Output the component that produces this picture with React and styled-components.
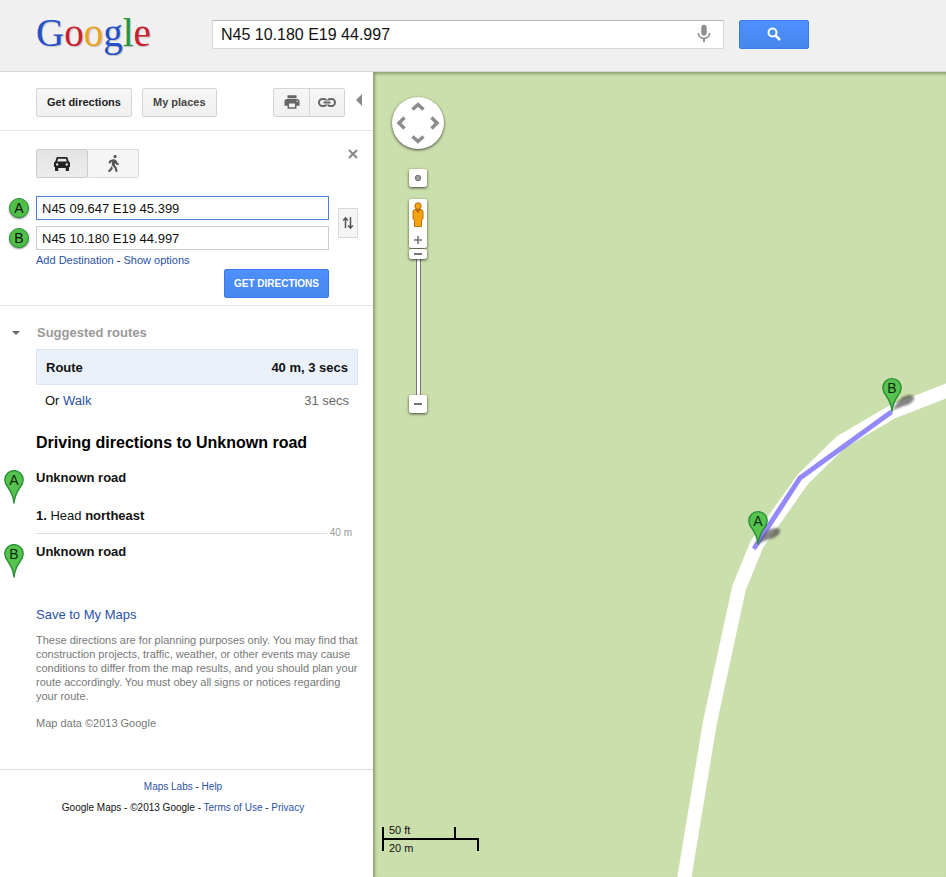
import React, { useState } from 'react';
import styled, { createGlobalStyle } from 'styled-components';
import { MdPrint, MdMic } from 'react-icons/md';
import { FaWalking } from 'react-icons/fa';

const LOGO = [
  ['G', '#2450c8'],
  ['o', '#c9202f'],
  ['o', '#e9a21b'],
  ['g', '#2450c8'],
  ['l', '#1f9a3a'],
  ['e', '#c9202f'],
];

const PinShape = ({ letter }) => (
  <g>
    <path
      d="M10 33.500 C9.500 26 7.500 22.500 4 17.500 C2 15 .8 12.800 .8 9.800 A9.200 9.200 0 0 1 19.200 9.800 C19.200 12.800 18 15 16 17.500 C12.500 22.500 10.500 26 10 33.500Z"
      fill="#55c34e"
      stroke="#2a8f35"
      strokeWidth="1.400"
    />
    <text x="10" y="15" textAnchor="middle" fontSize="14" fill="#0c2a0c">
      {letter}
    </text>
  </g>
);

const Pin = ({ letter }) => (
  <StPin width="20" height="34" viewBox="0 0 20 34">
    <PinShape letter={letter} />
  </StPin>
);

const CarIcon = () => (
  <svg width="16" height="14" viewBox="0 0 16 14" fill="currentColor">
    <path
      fillRule="evenodd"
      d="M3.800 0h8.400c.8 0 1.300.4 1.500 1.100L14.700 4.500c.8.300 1.300.9 1.300 1.700V10h-1v3c0 .6-.4 1-1 1h-1.300c-.6 0-1-.4-1-1v-2H4.300v2c0 .6-.4 1-1 1H2c-.6 0-1-.4-1-1v-3H0V6.200c0-.8.5-1.400 1.300-1.700l1-3.400C2.500.4 3 0 3.800 0zM4 1.700L3.200 4.500h9.600L12 1.700zM3.200 6.200a1.200 1.200 0 1 0 0 2.400 1.200 1.200 0 0 0 0-2.400zm9.600 0a1.200 1.200 0 1 0 0 2.400 1.200 1.200 0 0 0 0-2.400z"
    />
  </svg>
);

const LinkIcon = () => (
  <svg width="18" height="9" viewBox="0 0 18 9" fill="none" stroke="currentColor" strokeWidth="2">
    <path d="M8 2.500V2.300C7.700 1.500 7 1 6 1H4.500a3.500 3.500 0 0 0 0 7H6c1 0 1.700-.5 2-1.300v-.2M10 2.500v-.2c.3-.8 1-1.300 2-1.300h1.500a3.500 3.500 0 0 1 0 7H12c-1 0-1.700-.5-2-1.300v-.2M5.500 4.500h7" />
  </svg>
);

const SearchIcon = () => (
  <svg width="14" height="14" viewBox="0 0 14 14" fill="none" stroke="currentColor">
    <circle cx="5.500" cy="5.500" r="4" strokeWidth="2" />
    <path d="M8.500 8.500l4.500 4.500" strokeWidth="2.500" />
  </svg>
);

function Header() {
  const [query, setQuery] = useState('N45 10.180 E19 44.997');

  return (
    <StHeader>
      <StLogo>
        {LOGO.map(([letter, color], i) => (
          <StLogoLetter key={i} $color={color}>
            {letter}
          </StLogoLetter>
        ))}
      </StLogo>
      <StSearchBox>
        <StSearchInput aria-label="Search maps" value={query} onChange={(e) => setQuery(e.target.value)} />
        <StMicButton aria-label="Voice search">
          <MdMic size={22} />
        </StMicButton>
      </StSearchBox>
      <StSearchButton aria-label="Search">
        <SearchIcon />
      </StSearchButton>
    </StHeader>
  );
}

function DirectionsForm() {
  const [from, setFrom] = useState('N45 09.647 E19 45.399');
  const [to, setTo] = useState('N45 10.180 E19 44.997');

  const swap = () => {
    setFrom(to);
    setTo(from);
  };

  return (
    <StForm onSubmit={(e) => e.preventDefault()}>
      <StFormTop>
        <StModes>
          <StModeButton type="button" aria-label="By car" $active>
            <CarIcon />
          </StModeButton>
          <StModeButton type="button" aria-label="Walking">
            <FaWalking size={17} />
          </StModeButton>
        </StModes>
        <StCloseButton type="button" aria-label="Close">
          <svg width="10" height="10" viewBox="0 0 10 10" fill="none" stroke="#888" strokeWidth="2">
            <path d="M1 1l8 8M9 1L1 9" />
          </svg>
        </StCloseButton>
      </StFormTop>
      <StFields>
        <StPlaces>
          <StPlaceRow>
            <StBadge htmlFor="from">A</StBadge>
            <StPlaceInput id="from" $active value={from} onChange={(e) => setFrom(e.target.value)} />
          </StPlaceRow>
          <StPlaceRow>
            <StBadge htmlFor="to">B</StBadge>
            <StPlaceInput id="to" value={to} onChange={(e) => setTo(e.target.value)} />
          </StPlaceRow>
        </StPlaces>
        <StSwapButton type="button" aria-label="Swap start and end" onClick={swap}>
          <svg width="12" height="14" viewBox="0 0 12 14" fill="none" stroke="#555" strokeWidth="1.500">
            <path d="M3.500 12V2M1.200 4.500l2.300-2.700 2.300 2.700M8.500 1v11M6.200 9.500l2.300 2.700 2.300-2.700" />
          </svg>
        </StSwapButton>
      </StFields>
      <StOptions>
        <StLink href="#add">Add Destination</StLink> - <StLink href="#options">Show options</StLink>
      </StOptions>
      <StSubmit type="submit">GET DIRECTIONS</StSubmit>
    </StForm>
  );
}

function Routes() {
  return (
    <StRoutes>
      <StRoutesTitle>
        <StCaret />
        Suggested routes
      </StRoutesTitle>
      <StRouteRow $selected>
        <span>Route</span>
        <span>40 m, 3 secs</span>
      </StRouteRow>
      <StRouteRow>
        <span>
          Or <StLink href="#walk">Walk</StLink>
        </span>
        <StDuration>31 secs</StDuration>
      </StRouteRow>

      <StHeading>Driving directions to Unknown road</StHeading>
      <StWaypoint>
        <Pin letter="A" />
        <b>Unknown road</b>
      </StWaypoint>
      <StStep>
        <b>1.</b> Head <b>northeast</b>
      </StStep>
      <StDistance>40 m</StDistance>
      <StWaypoint>
        <Pin letter="B" />
        <b>Unknown road</b>
      </StWaypoint>

      <StSave>
        <StLink href="#save">Save to My Maps</StLink>
      </StSave>
      <StNotice>
        These directions are for planning purposes only. You may find that construction projects, traffic, weather, or
        other events may cause conditions to differ from the map results, and you should plan your route accordingly.
        You must obey all signs or notices regarding your route.
      </StNotice>
      <StNotice>Map data ©2013 Google</StNotice>
    </StRoutes>
  );
}

function Sidebar() {
  return (
    <StSidebar>
      <StToolbar>
        <StButton $dark>Get directions</StButton>
        <StButton>My places</StButton>
        <StTools>
          <StToolButton aria-label="Print">
            <MdPrint size={18} />
          </StToolButton>
          <StToolButton aria-label="Link">
            <LinkIcon />
          </StToolButton>
        </StTools>
        <StCollapse aria-label="Hide panel">
          <svg width="6" height="12" viewBox="0 0 6 12">
            <path d="M6 0v12L0 6z" fill="#888" />
          </svg>
        </StCollapse>
      </StToolbar>
      <DirectionsForm />
      <Routes />
      <StFooter>
        <p>
          <StLink href="#labs">Maps Labs</StLink> - <StLink href="#help">Help</StLink>
        </p>
        <p>
          Google Maps - ©2013 Google - <StLink href="#terms">Terms of Use</StLink> -{' '}
          <StLink href="#privacy">Privacy</StLink>
        </p>
      </StFooter>
    </StSidebar>
  );
}

function MapControls() {
  const [zoom, setZoom] = useState(20);

  return (
    <StControls>
      <StPan aria-label="Pan the map">
        <svg width="52" height="52" viewBox="0 0 52 52" fill="none" stroke="#8d8d8d" strokeWidth="3.500">
          <path d="M20.500 12.500L26 7.500l5.500 5M20.500 39.500L26 44.500l5.500-5M12.500 20.500L7 26l5.500 5.500M39.500 20.500L45 26l-5.500 5.500" />
        </svg>
      </StPan>
      <StMapButton aria-label="Show my location">
        <svg width="8" height="8" viewBox="0 0 8 8">
          <circle cx="4" cy="4" r="2.700" fill="#999" stroke="#777" />
        </svg>
      </StMapButton>
      <StZoom>
        <StPegBox>
          <svg width="12" height="26" viewBox="0 0 12 26" fill="#f5a313" stroke="#b8700a" strokeWidth="1">
            <path d="M2.500 7.500h7l1.500 1.500v8l-1.500 1v6.500h-7V18L1 17V9z" />
            <circle cx="6" cy="4" r="3.200" />
            <path d="M4 8l2 2.500L8 8" fill="#d55a12" />
          </svg>
          <StZoomIn aria-label="Zoom in" onClick={() => setZoom(Math.min(20, zoom + 1))}>
            <svg width="10" height="10" viewBox="0 0 10 10" stroke="#777" strokeWidth="1.600">
              <path d="M1 5h8M5 1v8" />
            </svg>
          </StZoomIn>
        </StPegBox>
        <StSlider
          type="range"
          aria-label="Zoom level"
          min="0"
          max="20"
          value={zoom}
          onChange={(e) => setZoom(Number(e.target.value))}
        />
        <StMapButton aria-label="Zoom out" onClick={() => setZoom(Math.max(0, zoom - 1))}>
          <svg width="10" height="10" viewBox="0 0 10 10" stroke="#777" strokeWidth="2">
            <path d="M1 5h8" />
          </svg>
        </StMapButton>
      </StZoom>
    </StControls>
  );
}

function MapView() {
  return (
    <StMap>
      <StCanvas>
        <defs>
          <filter id="soft" x="-30%" y="-60%" width="160%" height="220%">
            <feGaussianBlur stdDeviation="1.200" />
          </filter>
        </defs>
        <path
          d="M700 270L573 319L519 340L468 370L430 407L384 472L366 516L337 650L304 850"
          fill="none"
          stroke="#fff"
          strokeWidth="14"
          strokeLinejoin="round"
        />
        <path
          d="M382 475L427 406L517 341"
          fill="none"
          stroke="#6f62f5"
          strokeOpacity=".75"
          strokeWidth="5"
          strokeLinecap="round"
        />
        <g fill="#333" fillOpacity=".6" filter="url(#soft)">
          <path d="M385 472C390 464 393 457 402 456C410 456 408 463 400 466C394 468 390 469 385 472Z" />
          <path d="M519 339C524 331 527 324 536 323C544 323 542 330 534 333C528 335 524 336 519 339Z" />
        </g>
        <g transform="translate(375 439)">
          <PinShape letter="A" />
        </g>
        <g transform="translate(509 306)">
          <PinShape letter="B" />
        </g>
      </StCanvas>
      <MapControls />
      <StScale>
        <StFeet>50 ft</StFeet>
        <StMeters>20 m</StMeters>
      </StScale>
    </StMap>
  );
}

function App() {
  return (
    <StPage>
      <GlobalStyle />
      <Header />
      <StMain>
        <Sidebar />
        <MapView />
      </StMain>
    </StPage>
  );
}

const GlobalStyle = createGlobalStyle`
  * {
    box-sizing: border-box;
  }

  body {
    margin: 0;
    background: #fff;
    color: #111;
    font-family: 'Liberation Sans', Arial, sans-serif;
    font-size: 13px;
  }

  p,
  h1,
  h2 {
    margin: 0;
  }

  button,
  input {
    font-family: inherit;
    margin: 0;
  }

  button {
    cursor: pointer;
    padding: 0;
  }

  svg {
    display: block;
  }
`;

const StPage = styled.div`
  display: flex;
  flex-direction: column;
  min-height: 100vh;
`;

const StHeader = styled.header`
  display: flex;
  align-items: center;
  height: 72px;
  padding: 0 36px 3px;
  background: #f0f0f0;
  border-bottom: 1px solid #d8d8d8;
`;

const StLogo = styled.h1`
  width: 176px;
  flex-shrink: 0;
  padding-bottom: 2px;
  font-family: 'Liberation Serif', serif;
  font-size: 39px;
  font-weight: normal;
  line-height: 48px;
`;

const StLogoLetter = styled.span`
  color: ${(props) => props.$color};
  text-shadow: 1px 1px 1px rgba(0, 0, 0, 0.2);
`;

const StSearchBox = styled.div`
  display: flex;
  align-items: center;
  flex: 0 1 512px;
  height: 29px;
  padding-right: 8px;
  background: #fff;
  border: 1px solid #d9d9d9;
  border-top-color: #b9b9b9;
`;

const StSearchInput = styled.input`
  flex: 1;
  min-width: 0;
  padding: 2px 8px 0;
  border: 0;
  outline: 0;
  background: none;
  color: #111;
  font-size: 16px;
`;

const StMicButton = styled.button`
  border: 0;
  background: none;
  color: #8f8f8f;
`;

const StSearchButton = styled.button`
  display: flex;
  align-items: center;
  justify-content: center;
  width: 70px;
  height: 29px;
  margin-left: 15px;
  border: 1px solid #3a7bea;
  border-radius: 2px;
  background: linear-gradient(#4d90fe, #4787ed);
  color: #fff;
`;

const StMain = styled.main`
  display: flex;
  flex: 1;
`;

const StSidebar = styled.aside`
  width: 373px;
  flex-shrink: 0;
`;

const StToolbar = styled.div`
  display: flex;
  align-items: center;
  height: 59px;
  padding: 2px 10px 0 36px;
  border-bottom: 1px solid #e5e5e5;
`;

const StButton = styled.button`
  height: 29px;
  margin-right: 10px;
  padding: 0 10px;
  border: 1px solid #d4d4d4;
  border-radius: 2px;
  background: linear-gradient(#f6f6f6, #f0f0f0);
  color: ${(props) => (props.$dark ? '#222' : '#444')};
  font-size: 11px;
  font-weight: bold;
`;

const StTools = styled.div`
  display: flex;
  margin-left: auto;
  border: 1px solid #d4d4d4;
  border-radius: 2px;
  background: linear-gradient(#f6f6f6, #f0f0f0);
`;

const StToolButton = styled.button`
  display: flex;
  align-items: center;
  justify-content: center;
  width: 35px;
  height: 27px;
  border: 0;
  background: none;
  color: #666;

  & + & {
    border-left: 1px solid #d4d4d4;
  }
`;

const StCollapse = styled.button`
  margin: 0 1px 4px 11px;
  border: 0;
  background: none;
`;

const StForm = styled.form`
  display: flex;
  flex-direction: column;
  padding: 18px 15px 7px 9px;
  border-bottom: 1px solid #e5e5e5;
`;

const StFormTop = styled.div`
  display: flex;
  align-items: flex-start;
  justify-content: space-between;
  padding-left: 27px;
`;

const StModes = styled.div`
  display: flex;
`;

const StModeButton = styled.button`
  display: flex;
  align-items: center;
  justify-content: center;
  width: 52px;
  height: 29px;
  border: 1px solid ${(props) => (props.$active ? '#ccc' : '#dcdcdc')};
  border-radius: 2px;
  background: ${(props) => (props.$active ? 'linear-gradient(#e4e4e4, #ececec)' : '#f5f5f5')};
  color: ${(props) => (props.$active ? '#222' : '#555')};

  & + & {
    width: 51px;
    border-left: 0;
  }
`;

const StCloseButton = styled.button`
  border: 0;
  background: none;
`;

const StFields = styled.div`
  display: flex;
  align-items: center;
  gap: 9px;
  margin-top: 18px;
`;

const StPlaces = styled.div`
  display: flex;
  flex: 1;
  flex-direction: column;
  gap: 6px;
`;

const StPlaceRow = styled.div`
  display: flex;
  align-items: center;
  gap: 7px;
`;

const StBadge = styled.label`
  width: 20px;
  height: 20px;
  border: 1px solid #2c8f3a;
  border-radius: 50%;
  background: #4fbf48;
  box-shadow: 0 1px 2px rgba(0, 0, 0, 0.5);
  font-size: 14px;
  line-height: 18px;
  text-align: center;
`;

const StPlaceInput = styled.input`
  flex: 1;
  min-width: 0;
  height: 24px;
  padding: 0 5px;
  border: 1px solid ${(props) => (props.$active ? '#4d82d8' : '#ccc')};
  outline: 0;
  color: #111;
  font-size: 13px;
`;

const StSwapButton = styled.button`
  display: flex;
  align-items: center;
  justify-content: center;
  width: 20px;
  height: 30px;
  border: 1px solid #d9d9d9;
  background: #f5f5f5;
`;

const StOptions = styled.p`
  margin: 3px 0 2px 27px;
  font-size: 11px;
  line-height: 14px;
`;

const StLink = styled.a`
  color: #2a52a8;
  text-decoration: none;
`;

const StSubmit = styled.button`
  align-self: flex-end;
  height: 29px;
  margin-right: 29px;
  padding: 0 9px;
  border: 1px solid #3a7bea;
  border-radius: 2px;
  background: linear-gradient(#4d90fe, #4787ed);
  color: #fff;
  font-size: 10px;
  font-weight: bold;
`;

const StRoutes = styled.section`
  padding: 17px 15px 39px 36px;
`;

const StRoutesTitle = styled.h2`
  display: flex;
  align-items: center;
  margin: 0 0 6px -24px;
  color: #999;
  font-size: 13px;
  line-height: 20px;
`;

const StCaret = styled.span`
  margin-right: 17px;
  border: 4px solid transparent;
  border-top-color: #666;
  border-bottom: 0;
`;

const StRouteRow = styled.div`
  display: flex;
  align-items: center;
  justify-content: space-between;
  height: ${(props) => (props.$selected ? '36px' : '30px')};
  padding: 0 9px;
  border: ${(props) => (props.$selected ? '1px solid #dbe6f3' : '0')};
  background: ${(props) => (props.$selected ? '#eaf1fb' : 'none')};
  font-weight: ${(props) => (props.$selected ? 'bold' : 'normal')};
`;

const StDuration = styled.span`
  color: #666;
`;

const StHeading = styled.h2`
  margin: 18px 0 16px;
  color: #000;
  font-size: 16px;
  line-height: 20px;
`;

const StWaypoint = styled.div`
  display: flex;
  align-items: flex-start;
  gap: 12px;
  margin-left: -32px;
  line-height: 18px;
`;

const StPin = styled.svg`
  margin-top: 1px;
`;

const StStep = styled.p`
  margin-top: 3px;
  line-height: 18px;
`;

const StDistance = styled.p`
  display: flex;
  align-items: center;
  gap: 3px;
  margin: 1px 6px 3px 0;
  color: #999;
  font-size: 10px;
  line-height: 14px;

  &::before {
    content: '';
    flex: 1;
    border-top: 1px solid #ddd;
  }
`;

const StSave = styled.p`
  margin: 28px 0 9px;
  line-height: 18px;
`;

const StNotice = styled.p`
  color: #777;
  font-size: 11px;
  line-height: 14px;

  & + & {
    margin-top: 13px;
  }
`;

const StFooter = styled.footer`
  display: flex;
  flex-direction: column;
  gap: 7px;
  padding: 10px 7px 10px 0;
  border-top: 1px solid #dcdcdc;
  font-size: 10px;
  line-height: 14px;
  text-align: center;
`;

const StMap = styled.section`
  position: relative;
  flex: 1;
  min-width: 0;
  overflow: hidden;
  background: #cbdfac;
  box-shadow: inset 2px 2px 3px rgba(60, 80, 40, 0.45);
`;

const StCanvas = styled.svg`
  position: absolute;
  inset: 0;
  width: 100%;
  height: 100%;
`;

const StControls = styled.div`
  position: absolute;
  top: 25px;
  left: 19px;
  display: flex;
  flex-direction: column;
  align-items: center;
`;

const StPan = styled.button`
  width: 52px;
  height: 52px;
  border: 0;
  border-radius: 50%;
  background: #fff;
  box-shadow: 0 1px 3px rgba(0, 0, 0, 0.7);
`;

const StMapButton = styled.button`
  display: flex;
  align-items: center;
  justify-content: center;
  width: 18px;
  height: 18px;
  border: 0;
  border-radius: 2px;
  background: #fff;
  box-shadow: 0 1px 3px rgba(0, 0, 0, 0.7);

  ${StPan} + & {
    margin-top: 20px;
  }
`;

const StZoom = styled.div`
  display: flex;
  flex-direction: column;
  align-items: center;
  margin-top: 12px;
`;

const StPegBox = styled.div`
  display: flex;
  flex-direction: column;
  align-items: center;
  justify-content: space-between;
  width: 18px;
  height: 49px;
  padding: 3px 0;
  border-radius: 2px;
  background: #fff;
  box-shadow: 0 1px 3px rgba(0, 0, 0, 0.7);
`;

const StZoomIn = styled.button`
  border: 0;
  background: none;
`;

const StSlider = styled.input`
  width: 18px;
  height: 146px;
  margin-top: 1px;
  appearance: none;
  writing-mode: vertical-lr;
  direction: rtl;
  background: linear-gradient(90deg, #777 1px, #fff 1px, #fff 4px, #777 4px) center / 5px 100% no-repeat;

  &::-webkit-slider-thumb {
    appearance: none;
    width: 18px;
    height: 10px;
    border-radius: 2px;
    background: linear-gradient(#777, #777) center / 8px 2px no-repeat #fff;
    box-shadow: 0 1px 3px rgba(0, 0, 0, 0.7);
  }
`;

const StScale = styled.div`
  position: absolute;
  bottom: 26px;
  left: 9px;
  color: #111;
  font-size: 11px;
`;

const StFeet = styled.div`
  width: 74px;
  height: 11px;
  padding-left: 5px;
  border-left: 2px solid #000;
  border-right: 2px solid #000;
  line-height: 6px;
`;

const StMeters = styled.div`
  width: 97px;
  height: 13px;
  padding-left: 5px;
  border: 2px solid #000;
  border-bottom: 0;
  line-height: 17px;
`;

export default App;
